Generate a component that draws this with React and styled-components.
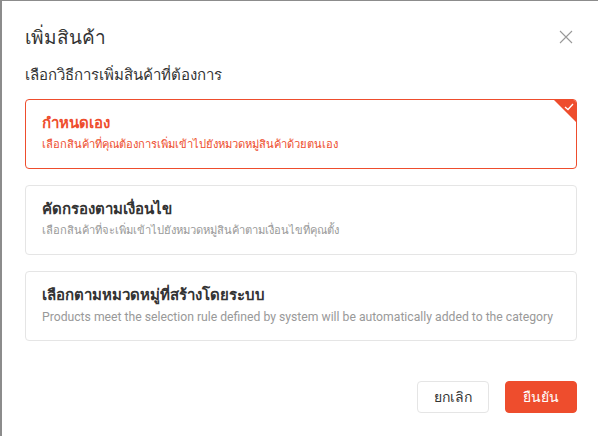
import React, { useState } from 'react'
import styled, { createGlobalStyle } from 'styled-components'

const GlobalStyle = createGlobalStyle`
  html, body {
    margin: 0;
    padding: 0;
    background: #8c8c8c;
  }
  body {
    font-family: Roboto, "Noto Sans", "Liberation Sans", sans-serif;
  }
`

const Modal = styled.div`
  box-sizing: border-box;
  margin: 1px 0 0 2px;
  width: 596px;
  height: 435px;
  background: #fff;
  display: flex;
  flex-direction: column;
  padding: 0 21px 0 23px;
`

const Header = styled.div`
  display: flex;
  align-items: center;
  justify-content: space-between;
  padding-top: 24px;
  height: 24px;
`

const Title = styled.h2`
  margin: 0;
  font-size: 19px;
  font-weight: 400;
  color: #333;
`

const CloseButton = styled.button`
  border: 0;
  background: none;
  padding: 0;
  margin: 0 4px 1px 0;
  width: 14px;
  height: 14px;
  display: flex;
  cursor: pointer;
`

const Subtitle = styled.p`
  margin: 16px 0 14px;
  font-size: 15px;
  color: #333;
  line-height: 20px;
`

const Options = styled.div`
  display: flex;
  flex-direction: column;
  gap: 16px;
`

const Option = styled.div`
  position: relative;
  box-sizing: border-box;
  height: 70px;
  padding: 13px 16px;
  border: 1px solid ${p => (p.$active ? '#ee4d2d' : '#e5e5e5')};
  border-radius: 4px;
  overflow: hidden;
  cursor: pointer;
`

const OptionTitle = styled.div`
  font-size: 15px;
  font-weight: 700;
  line-height: 20px;
  color: ${p => (p.$active ? '#ee4d2d' : '#333')};
`

const OptionDesc = styled.div`
  margin-top: 3px;
  font-size: ${p => (p.$latin ? '12.2px' : '11.2px')};
  line-height: 18px;
  color: ${p => (p.$active ? '#ee4d2d' : '#999')};
`

const Corner = styled.div`
  position: absolute;
  top: 0;
  right: 0;
  width: 0;
  height: 0;
  border-top: 22px solid #ee4d2d;
  border-left: 22px solid transparent;
`

const Check = styled.svg`
  position: absolute;
  top: 3px;
  right: 2px;
`

const Footer = styled.div`
  display: flex;
  justify-content: flex-end;
  gap: 16px;
  margin-top: 40px;
`

const Button = styled.button`
  box-sizing: border-box;
  width: 72px;
  height: 32px;
  border-radius: 4px;
  font-family: inherit;
  font-size: 14px;
  border: 1px solid ${p => (p.$primary ? '#ee4d2d' : '#e5e5e5')};
  background: ${p => (p.$primary ? '#ee4d2d' : '#fff')};
  color: ${p => (p.$primary ? '#fff' : '#333')};
  cursor: pointer;
`

const options = [
  {
    title: 'กำหนดเอง',
    desc: 'เลือกสินค้าที่คุณต้องการเพิ่มเข้าไปยังหมวดหมู่สินค้าด้วยตนเอง',
  },
  {
    title: 'คัดกรองตามเงื่อนไข',
    desc: 'เลือกสินค้าที่จะเพิ่มเข้าไปยังหมวดหมู่สินค้าตามเงื่อนไขที่คุณตั้ง',
  },
  {
    title: 'เลือกตามหมวดหมู่ที่สร้างโดยระบบ',
    desc: 'Products meet the selection rule defined by system will be automatically added to the category',
    latin: true,
  },
]

export default function App() {
  const [selected, setSelected] = useState(0)

  return (
    <>
      <GlobalStyle />
      <Modal>
        <Header>
          <Title>เพิ่มสินค้า</Title>
          <CloseButton>
            <svg width="14" height="14" viewBox="0 0 14 14">
              <path d="M1 1L13 13M13 1L1 13" stroke="#999" strokeWidth="1.1" />
            </svg>
          </CloseButton>
        </Header>
        <Subtitle>เลือกวิธีการเพิ่มสินค้าที่ต้องการ</Subtitle>
        <Options>
          {options.map((o, i) => (
            <Option key={i} $active={selected === i} onClick={() => setSelected(i)}>
              <OptionTitle $active={selected === i}>{o.title}</OptionTitle>
              <OptionDesc $active={selected === i} $latin={o.latin}>{o.desc}</OptionDesc>
              {selected === i && (
                <>
                  <Corner />
                  <Check width="10" height="8" viewBox="0 0 10 8">
                    <path d="M1 4L4 6.5L9 1" stroke="#fff" strokeWidth="1.3" fill="none" />
                  </Check>
                </>
              )}
            </Option>
          ))}
        </Options>
        <Footer>
          <Button>ยกเลิก</Button>
          <Button $primary>ยืนยัน</Button>
        </Footer>
      </Modal>
    </>
  )
}
